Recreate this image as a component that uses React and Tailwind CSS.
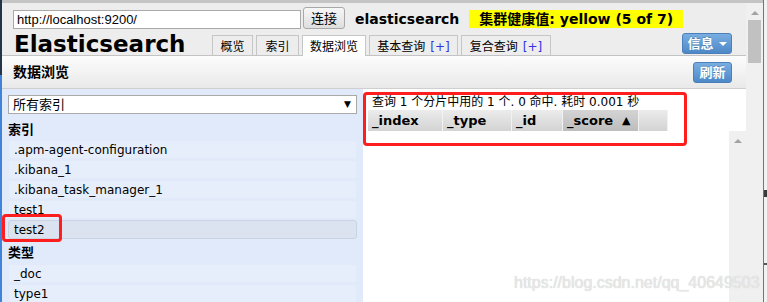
import React from "react";

const FONT = "[font-family:'DejaVu_Sans','Noto_Sans_CJK_SC',sans-serif]";

function UpArrow({ color = "border-b-[#a3a3a3]" }) {
  return (
    <div className={`w-0 h-0 border-x-[4px] border-x-transparent border-b-[4px] ${color}`} />
  );
}

function Tab({ w, active, children }) {
  return (
    <div
      className={`${w} flex items-center justify-center border border-[#c6c6c6] text-[12px] leading-none pt-[2px] ${
        active
          ? "bg-white h-[21px] -mb-[1px] border-b-0 relative z-10"
          : "bg-[#ededed] h-[20px] border-b-0"
      }`}
    >
      {children}
    </div>
  );
}

function Plus() {
  return <span className="text-[#3232e6] ml-[5px]">[+]</span>;
}

function Row({ children, selected }) {
  return (
    <div
      className={`h-[19px] mb-[1px] rounded-[3px] pl-[5px] flex items-center text-[12px] leading-none border ${
        selected
          ? "bg-[#dae3ef] border-[#c9d3e1]"
          : "bg-[#e7eefb] border-[#e2eafa]"
      }`}
    >
      {children}
    </div>
  );
}

function HeadCell({ w, children, active }) {
  return (
    <div
      className={`${w} h-[21px] flex items-center pl-[4px] text-[13px] font-bold leading-none border-r border-[#f2f2f2] ${
        active
          ? "bg-gradient-to-b from-[#d4d4d4] to-[#bdbdbd]"
          : "bg-gradient-to-b from-[#ececec] to-[#d3d3d3]"
      }`}
    >
      {children}
    </div>
  );
}

function BlueButton({ children, w }) {
  return (
    <div
      className={`${w} h-[21px] rounded-[3px] border border-[#4a7fb9] bg-gradient-to-b from-[#79aee2] to-[#4d88c7] text-white font-bold text-[13px] leading-none flex items-center justify-center [text-shadow:0_-1px_0_rgba(0,0,0,0.2)]`}
    >
      {children}
    </div>
  );
}

export default function App() {
  return (
    <div className={`relative w-[767px] h-[302px] overflow-hidden bg-white text-black flex ${FONT}`}>
      {/* left edge */}
      <div className="w-[2px] shrink-0 flex flex-col">
        <div className="h-[75px] bg-[#26344a]" />
        <div className="flex-1 bg-[#4183d9]" />
      </div>

      {/* main */}
      <div className="w-[744px] shrink-0 flex flex-col">
        <div className="h-[3px] bg-[#c4c4c4]" />
        {/* header */}
        <div className="h-[53px] bg-[#ededed] border-b border-[#c3c3c3] flex flex-col">
          <div className="h-[30px] flex items-start pt-[4px] pl-[11px]">
            <div className="mt-[3px] w-[288px] h-[19px] bg-white border border-[#a9a9a9] flex items-center pl-[3px] text-[13px] leading-none [font-family:'Liberation_Sans',sans-serif]">
              http://localhost:9200/
            </div>
            <div className="ml-[2px] w-[42px] h-[22px] rounded-[3px] border border-[#a8a8a8] bg-gradient-to-b from-[#f7f7f7] to-[#dedede] flex items-center justify-center text-[13px] leading-none">
              连接
            </div>
            <div className="ml-[10px] mt-[3px] h-[18px] flex items-center text-[14px] font-bold leading-none">
              elasticsearch
            </div>
            <div className="ml-[10px] mt-[3px] h-[18px] bg-[#ffff00] px-[10px] flex items-center text-[14px] font-bold leading-none">
              集群健康值: yellow (5 of 7)
            </div>
          </div>
          <div className="h-[22px] flex items-end">
            <div className="w-[210px] pl-[12px] h-[22px] text-[23px] font-bold leading-[22px] whitespace-nowrap">
              Elasticsearch
            </div>
            <div className="flex items-end gap-[3px]">
              <Tab w="w-[41px]">概览</Tab>
              <Tab w="w-[43px]">索引</Tab>
              <Tab w="w-[64px]" active>
                数据浏览
              </Tab>
              <Tab w="w-[89px]">
                基本查询
                <Plus />
              </Tab>
              <Tab w="w-[90px]">
                复合查询
                <Plus />
              </Tab>
            </div>
            <div className="ml-auto mr-[14px] mb-[1px]">
              <BlueButton w="w-[50px]">
                信息
                <span className="ml-[5px] w-0 h-0 border-x-[4px] border-x-transparent border-t-[4px] border-t-white" />
              </BlueButton>
            </div>
          </div>
        </div>

        {/* sub bar */}
        <div className="h-[33px] bg-gradient-to-b from-[#fcfcfc] to-[#e9e9e9] border-b border-[#cfcfcf] flex items-center pl-[11px]">
          <div className="text-[14px] font-bold leading-none">数据浏览</div>
          <div className="ml-auto mr-[14px]">
            <BlueButton w="w-[39px]">刷新</BlueButton>
          </div>
        </div>

        {/* body */}
        <div className="flex-1 flex min-h-0">
          <div className="w-[361px] shrink-0 bg-[#e0eafb] px-[6px] pt-[6px]">
            <div className="h-[19px] bg-white border border-[#a9a9a9] flex items-center pl-[4px] pr-[5px] text-[13px] leading-none">
              <span>所有索引</span>
              <span className="ml-auto text-[9px]">▼</span>
            </div>
            <div className="h-[26px] pt-[4px] flex items-center text-[13px] font-bold leading-none">
              索引
            </div>
            <Row>.apm-agent-configuration</Row>
            <Row>.kibana_1</Row>
            <Row>.kibana_task_manager_1</Row>
            <Row>test1</Row>
            <Row selected>test2</Row>
            <div className="h-[24px] flex items-center text-[13px] font-bold leading-none">
              类型
            </div>
            <Row>_doc</Row>
            <Row>type1</Row>
          </div>

          <div className="flex-1 flex flex-col">
            <div className="h-[42px] pt-[5px]">
              <div className="h-[16px] pl-[9px] flex items-center text-[12px] leading-none whitespace-nowrap">
                查询 1 个分片中用的 1 个. 0 命中. 耗时 0.001 秒
              </div>
              <div className="ml-[5px] flex">
                <HeadCell w="w-[75px]">_index</HeadCell>
                <HeadCell w="w-[69px]">_type</HeadCell>
                <HeadCell w="w-[51px]">_id</HeadCell>
                <HeadCell w="w-[76px]" active>
                  _score<span className="ml-[9px] text-[11px]">▲</span>
                </HeadCell>
                <HeadCell w="w-[29px]" />
              </div>
            </div>
            <div className="flex-1 flex">
              <div className="flex-1 bg-white" />
              <div className="w-[17px] bg-[#f0f0f0] flex justify-center pt-[8px]">
                <UpArrow />
              </div>
            </div>
          </div>
        </div>
      </div>

      {/* outer scrollbar */}
      <div className="w-[17px] shrink-0 flex flex-col">
        <div className="h-[3px] bg-[#c4c4c4]" />
        <div className="flex-1 bg-[#f0f0f0] flex flex-col items-center">
          <div className="mt-[8px]">
            <UpArrow />
          </div>
          <div className="mt-[5px] w-[13px] h-[43px] bg-[#c1c1c1]" />
        </div>
      </div>
      <div className="w-[1px] shrink-0 bg-[#3d7fd6]" />
      <div className="w-[3px] shrink-0 bg-[#f2f2f2] flex flex-col">
        <div className="mt-[190px] h-[7px] bg-[#3a3a3a]" />
        <div className="mt-[66px] h-[2px] bg-[#555]" />
      </div>

      {/* annotations */}
      <div className="absolute left-[363px] top-[92px] w-[324px] h-[54px] border-[3px] border-[#ff1e1e] rounded-[4px] pointer-events-none" />
      <div className="absolute left-[2px] top-[214px] w-[60px] h-[28px] border-[3px] border-[#ff1e1e] rounded-[4px] pointer-events-none" />

      {/* watermark */}
      <div className="absolute left-[514px] top-[275px] text-[16px] leading-none text-[#e8e8e8] [font-family:'Liberation_Sans',sans-serif] [text-shadow:0_0_1px_#c8c8c8] whitespace-nowrap">
        https://blog.csdn.net/qq_40649503
      </div>
    </div>
  );
}
